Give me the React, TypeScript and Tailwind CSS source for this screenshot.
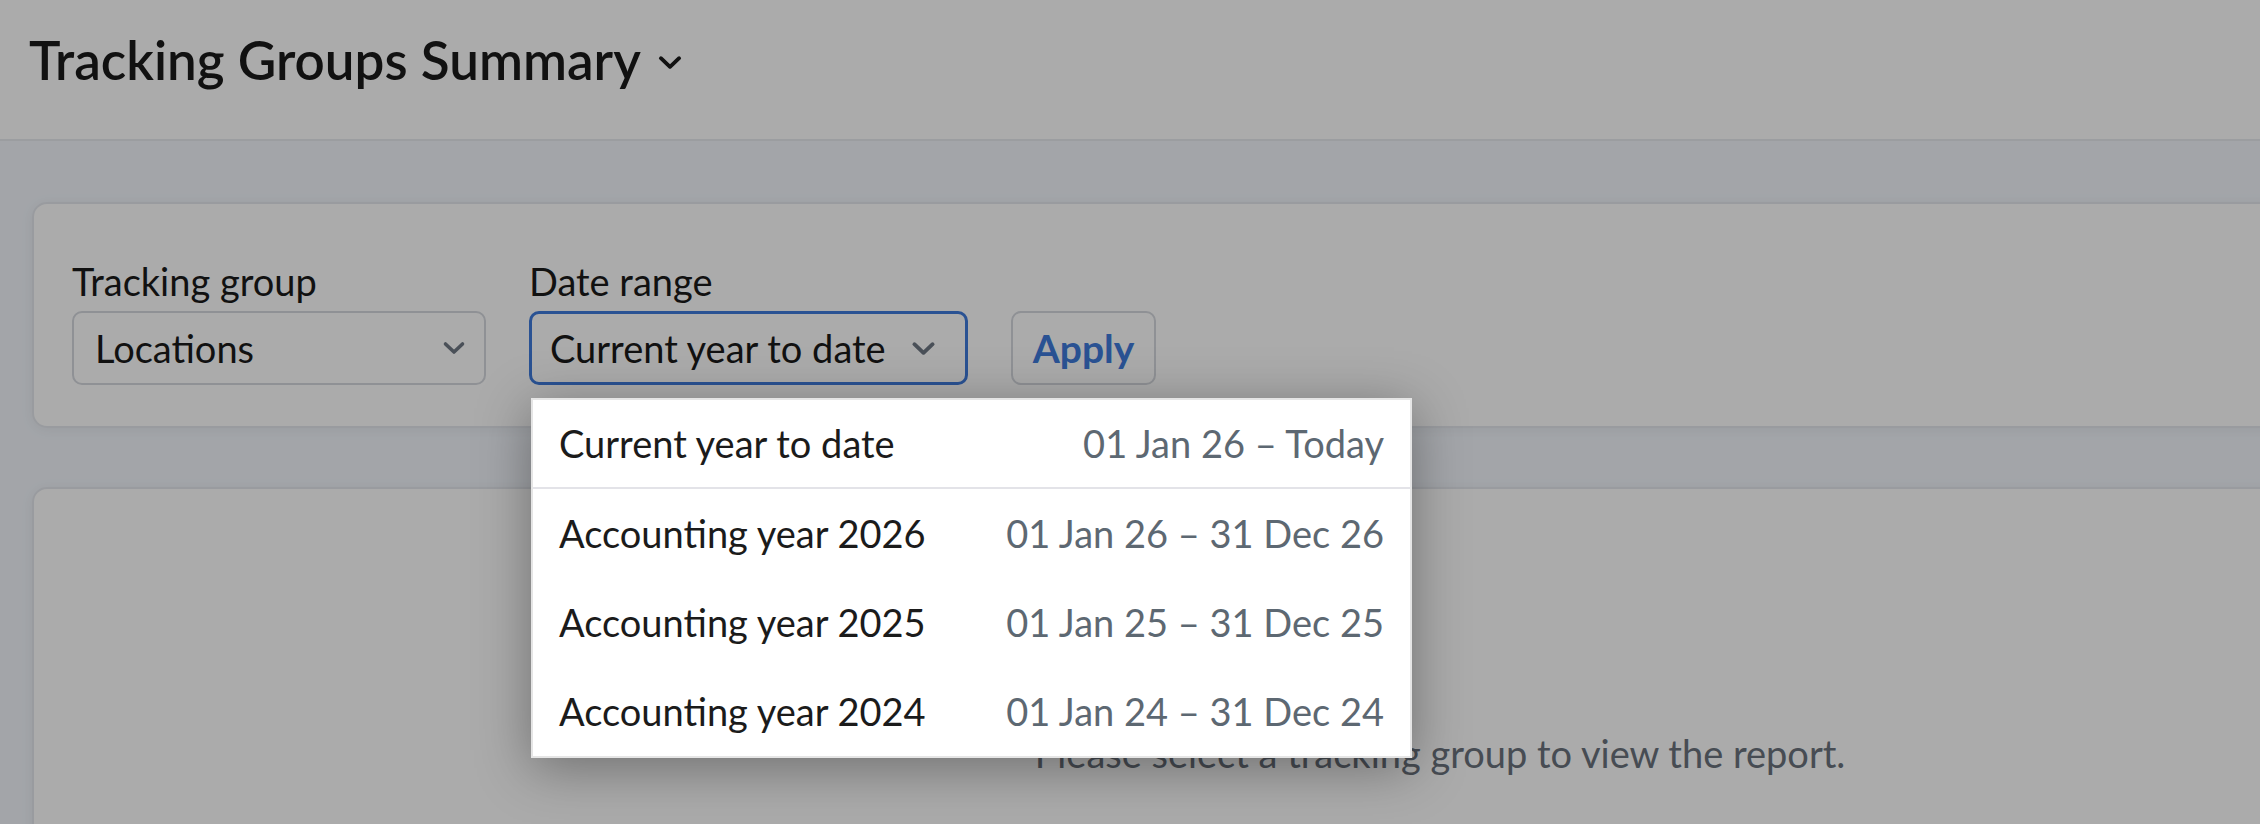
import { useState } from "react";

interface RangeOption {
  label: string;
  range: string;
}

const ranges: RangeOption[] = [
  { label: "Current year to date", range: "01 Jan 26 – Today" },
  { label: "Accounting year 2026", range: "01 Jan 26 – 31 Dec 26" },
  { label: "Accounting year 2025", range: "01 Jan 25 – 31 Dec 25" },
  { label: "Accounting year 2024", range: "01 Jan 24 – 31 Dec 24" },
];

function Chevron({ className }: { className?: string }) {
  return (
    <svg viewBox="0 0 24 14" className={className} fill="none">
      <path d="M3.5 3 L12 11 L20.5 3" stroke="currentColor" strokeWidth="3.6" strokeLinecap="round" strokeLinejoin="round" />
    </svg>
  );
}

function DateRangeMenu({ onPick }: { onPick: (label: string) => void }) {
  return (
    <div className="absolute left-[2px] top-[calc(100%+13px)] z-20 w-[881px] bg-white border-2 border-black/10 shadow-[0_10px_50px_rgba(0,0,0,0.35)]">
      {ranges.map((r, i) => (
        <div
          key={r.label}
          onClick={() => onPick(r.label)}
          className={`flex h-[89px] cursor-pointer items-center justify-between px-[26px] text-[38px] ${
            i == 0 ? "border-b-2 border-[#e3e3e8]" : ""
          }`}
        >
          <span className="text-[#1b1b1b]">{r.label}</span>
          <span className="text-[#5d6872]">{r.range}</span>
        </div>
      ))}
    </div>
  );
}

export default function App() {
  const [range, setRange] = useState("Current year to date");
  const [open, setOpen] = useState(true);

  return (
    <div
      className="relative h-[824px] w-full overflow-hidden bg-[#f3f7fd] text-[#1a1a1a]"
      style={{ fontFamily: "Lato, 'Noto Sans', sans-serif" }}
    >
      <header className="h-[141px] border-b-2 border-[#e8eaef] bg-white px-[29px] pt-[29px]">
        <div className="flex items-center gap-[16px]">
          <h1 className="text-[53px] font-semibold leading-[62px]">Tracking Groups Summary</h1>
          <Chevron className="mt-[4px] h-[15px] w-[26px] text-[#1a1a1a]" />
        </div>
      </header>

      <main className="flex w-[2880px] flex-col gap-[59px] px-[32px] pt-[61px]">
        <section className="rounded-[15px] border-2 border-[#e5e8ee] bg-white px-[38px] pb-[41px] pt-[54px] shadow-[0_2px_14px_rgba(0,0,0,0.06)]">
          <div className="flex items-end gap-[43px]">
            <div>
              <label className="block text-[38px] leading-[46px]">Tracking group</label>
              <div className="mt-[7px] flex h-[74px] w-[414px] items-center justify-between rounded-[10px] border-2 border-[#d5d8de] pl-[21px] pr-[18px] text-[38px]">
                <span>Locations</span>
                <Chevron className="h-[14px] w-[24px] text-[#6f7884]" />
              </div>
            </div>

            <div className="relative">
              <label className="block text-[38px] leading-[46px]">Date range</label>
              <div
                onClick={() => setOpen(!open)}
                className="mt-[7px] flex h-[74px] w-[439px] cursor-pointer items-center justify-between rounded-[10px] border-[3px] border-[#3f7bdc] pl-[18px] pr-[28px] text-[38px]"
              >
                <span>{range}</span>
                <Chevron className="h-[15px] w-[27px] text-[#6f7884]" />
              </div>
              {open && (
                <DateRangeMenu
                  onPick={(label) => {
                    setRange(label);
                    setOpen(false);
                  }}
                />
              )}
            </div>

            <button className="flex h-[74px] w-[145px] items-center justify-center rounded-[10px] border-2 border-[#d5d8de] text-[39px] font-bold text-[#3f7bdc]">
              Apply
            </button>
          </div>
        </section>

        <section className="h-[600px] rounded-[15px] border-2 border-[#e5e8ee] bg-white pt-[241px] text-center shadow-[0_2px_14px_rgba(0,0,0,0.06)]">
          <p className="text-[38px] leading-[46px] text-[#6a727c]">Please select a tracking group to view the report.</p>
        </section>
      </main>

      {/* dim layer behind the open menu */}
      {open && <div className="absolute inset-0 z-10 bg-black/[0.33]" onClick={() => setOpen(false)} />}
    </div>
  );
}
